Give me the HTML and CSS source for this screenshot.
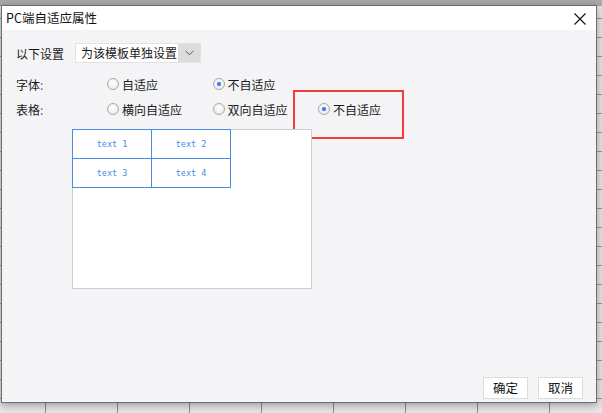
FILE: index.html
```html
<!DOCTYPE html>
<html>
<head>
<meta charset="utf-8">
<link rel="stylesheet" href="styles.css">
</head>
<body>
<div class="sheet"></div>
<div class="dialog">
  <div class="titlebar">
    <span class="title">PC端自适应属性</span>
    <svg class="close" width="12" height="12" viewBox="0 0 12 12"><path d="M0.5 0.5 L11.5 11.5 M11.5 0.5 L0.5 11.5" stroke="#111" stroke-width="1.1" fill="none"/></svg>
  </div>
  <div class="body">
    <div class="row setting">
      <span class="label">以下设置</span>
      <div class="select">
        <span class="select-text">为该模板单独设置</span>
        <span class="select-btn"><svg width="9" height="6" viewBox="0 0 9 6"><path d="M0.5 0.8 L4.5 4.8 L8.5 0.8" stroke="#555" stroke-width="1" fill="none"/></svg></span>
      </div>
    </div>
    <div class="row opts font-row">
      <span class="label">字体<span class="colon">:</span></span>
      <label class="opt"><span class="radio"></span>自适应</label>
      <label class="opt"><span class="radio on"></span>不自适应</label>
    </div>
    <div class="row opts table-row">
      <span class="label">表格<span class="colon">:</span></span>
      <label class="opt"><span class="radio"></span>横向自适应</label>
      <label class="opt"><span class="radio"></span>双向自适应</label>
      <label class="opt hl"><span class="radio on"></span>不自适应</label>
    </div>
    <div class="preview">
      <div class="grid">
        <div class="cell">text 1</div>
        <div class="cell">text 2</div>
        <div class="cell">text 3</div>
        <div class="cell">text 4</div>
      </div>
    </div>
  </div>
  <div class="footer">
    <button class="btn">确定</button>
    <button class="btn">取消</button>
  </div>
</div>
</body>
</html>
```
FILE: styles.css
```css
* { box-sizing: border-box; }
html, body { margin: 0; padding: 0; }
body {
  width: 602px;
  height: 413px;
  overflow: hidden;
  position: relative;
  font-family: "Noto Sans CJK SC", "Noto Sans", sans-serif;
  font-size: 12px;
  color: #1a1a1a;
  background-color: #e6e6e6;
  background-image:
    repeating-linear-gradient(90deg, transparent 0 45px, #8c8c8c 45px 46px, transparent 46px 72px),
    repeating-linear-gradient(180deg, transparent 0 18px, #9a9a9a 18px 19px);
}
.sheet {
  position: absolute;
  left: 0; top: 0; right: 0; height: 6px;
  background: #a9a9a9;
}
.dialog {
  position: absolute;
  left: 1px;
  top: 5px;
  width: 596px;
  height: 398px;
  border: 1px solid #6e6e6e;
  background: #f4f4f6;
  box-shadow: 0 2px 8px rgba(0,0,0,0.35);
  display: flex;
  flex-direction: column;
}
.titlebar {
  height: 24px;
  background: #fff;
  display: flex;
  align-items: center;
  justify-content: space-between;
  padding: 0 10px 0 4px;
  flex: none;
}
.title { font-size: 12.5px; color: #111; line-height: 1; }
.close { display: block; margin-top: 1px; }
.body {
  flex: 1;
  padding: 12px 0 0 14px;
  display: flex;
  flex-direction: column;
}
.row { display: flex; align-items: center; }
.label { width: 91px; flex: none; }
.colon { color: #5a6a8a; }
.setting { height: 20px; margin-top: 1px; }
.setting .label { width: 59px; }
.select {
  display: flex;
  height: 20px;
  width: 126px;
  background: #fff;
  border: 1px solid #e2e2e2;
}
.select-text { padding-left: 5px; line-height: 18px; font-size: 12px; flex: 1; white-space: nowrap; }
.select-btn {
  width: 22px;
  background: #dcdcdc;
  display: flex;
  align-items: center;
  justify-content: center;
}
.opts { height: 20px; }
.font-row { margin-top: 11px; }
.table-row { margin-top: 5px; }
.opt {
  display: flex;
  align-items: center;
  width: 105.5px;
  flex: none;
  white-space: nowrap;
  position: relative;
}
.radio {
  width: 12px;
  height: 12px;
  border-radius: 50%;
  border: 1px solid #a9a9a9;
  background: radial-gradient(circle at 50% 40%, #ffffff 0, #f0f0f0 60%, #e2e2e2 100%);
  margin-right: 3px;
  position: relative;
  flex: none;
}
.radio.on::after {
  content: "";
  position: absolute;
  left: 3px; top: 3px;
  width: 4px; height: 4px;
  border-radius: 50%;
  background: #3d7ee8;
  box-shadow: 0 0 1px #7fb0ff;
}
.hl::before {
  content: "";
  position: absolute;
  left: -25px;
  top: -11px;
  width: 107px;
  height: 45px;
  border: 2px solid #f03c3c;
}
.preview {
  margin: 10px 0 0 56px;
  width: 240px;
  height: 160px;
  background: #fff;
  border: 1px solid #cdcdcd;
  position: relative;
}
.grid {
  position: absolute;
  left: -1px; top: -1px;
  display: grid;
  grid-template-columns: 79px 79px;
  grid-template-rows: 29px 29px;
  border-left: 1px solid #4a8be6;
  border-top: 1px solid #4a8be6;
}
.cell {
  border-right: 1px solid #4a8be6;
  border-bottom: 1px solid #4a8be6;
  display: flex;
  align-items: center;
  justify-content: center;
  color: #4a8be6;
  font-family: "DejaVu Sans Mono", monospace;
  font-size: 8.5px;
}
.footer {
  flex: none;
  display: flex;
  justify-content: flex-end;
  gap: 10px;
  padding: 0 13px 3px 0;
}
.btn {
  width: 45px;
  height: 22px;
  background: #fff;
  border: 1px solid #dcdcdc;
  font-family: "Noto Sans CJK SC", sans-serif;
  font-size: 12.5px;
  color: #111;
  padding: 0;
  line-height: 20px;
}
```
